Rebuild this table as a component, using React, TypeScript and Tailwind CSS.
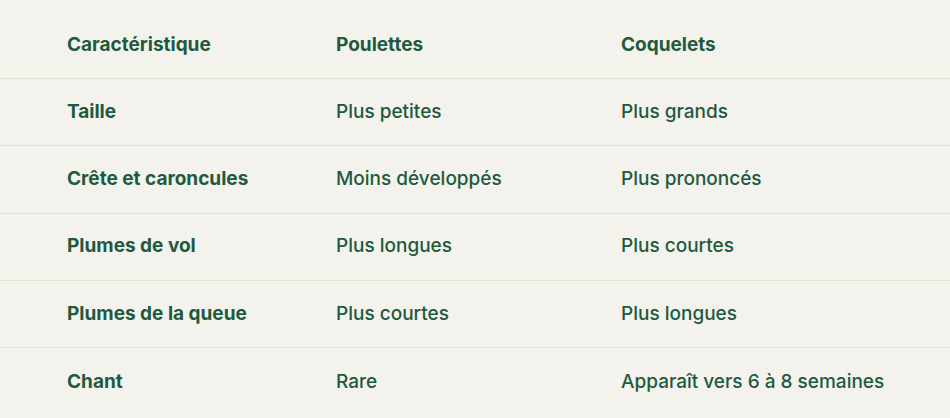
const rows: [string, string, string][] = [
  ["Taille", "Plus petites", "Plus grands"],
  ["Crête et caroncules", "Moins développés", "Plus prononcés"],
  ["Plumes de vol", "Plus longues", "Plus courtes"],
  ["Plumes de la queue", "Plus courtes", "Plus longues"],
  ["Chant", "Rare", "Apparaît vers 6 à 8 semaines"],
];

export default function App() {
  return (
    <div
      className="w-[950px] h-[418px] bg-[#f4f2ed] text-[#1e5a3e] text-[19px] overflow-hidden"
      style={{ fontFamily: "Inter, 'Noto Sans', sans-serif" }}
    >
      <div className="pt-[12px]">
        <div className="grid grid-cols-[269px_285px_1fr] pl-[67px] h-[67px] items-center border-b border-[#e3e1d2] font-bold">
          <div>Caractéristique</div>
          <div>Poulettes</div>
          <div>Coquelets</div>
        </div>
        {rows.map((r) => (
          <div
            key={r[0]}
            className="grid grid-cols-[269px_285px_1fr] pl-[67px] h-[67.3px] items-center border-b border-[#e3e1d2] last:border-b-0"
          >
            <div className="font-bold">{r[0]}</div>
            <div className="font-medium">{r[1]}</div>
            <div className="font-medium">{r[2]}</div>
          </div>
        ))}
      </div>
    </div>
  );
}
